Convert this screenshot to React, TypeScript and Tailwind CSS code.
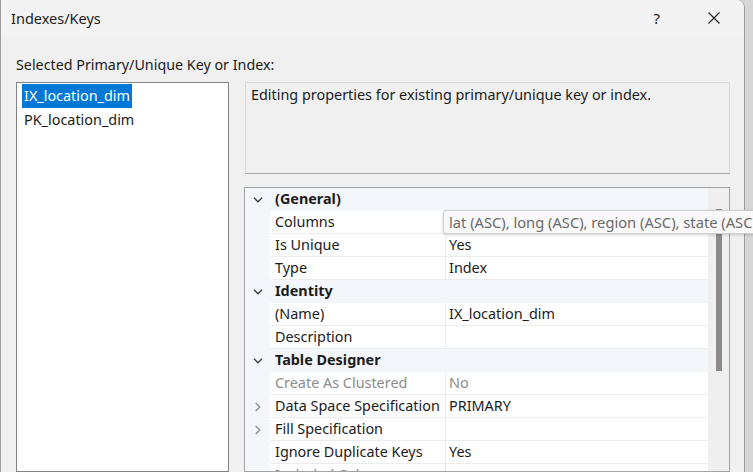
import React from "react";

type Row =
  | { kind: "cat"; label: string }
  | { kind: "prop"; label: string; value?: string; muted?: boolean; expand?: boolean };

const rows: Row[] = [
  { kind: "cat", label: "(General)" },
  { kind: "prop", label: "Columns", value: "" },
  { kind: "prop", label: "Is Unique", value: "Yes" },
  { kind: "prop", label: "Type", value: "Index" },
  { kind: "cat", label: "Identity" },
  { kind: "prop", label: "(Name)", value: "IX_location_dim" },
  { kind: "prop", label: "Description", value: "" },
  { kind: "cat", label: "Table Designer" },
  { kind: "prop", label: "Create As Clustered", value: "No", muted: true },
  { kind: "prop", label: "Data Space Specification", value: "PRIMARY", expand: true },
  { kind: "prop", label: "Fill Specification", value: "", expand: true },
  { kind: "prop", label: "Ignore Duplicate Keys", value: "Yes" },
  { kind: "prop", label: "Included Columns", value: "", muted: true },
];

function ChevronDown() {
  return (
    <svg width="10" height="6" viewBox="0 0 10 6" className="block">
      <path d="M1 0.8 L5 4.8 L9 0.8" fill="none" stroke="#3a3a3a" strokeWidth="1.3" />
    </svg>
  );
}

function ChevronRight() {
  return (
    <svg width="6" height="10" viewBox="0 0 6 10" className="block">
      <path d="M0.8 1 L4.8 5 L0.8 9" fill="none" stroke="#8a8a8a" strokeWidth="1.3" />
    </svg>
  );
}

export default function App() {
  return (
    <div className="w-[753px] h-[472px] overflow-hidden bg-[#d6d6d6] font-['Noto_Sans',sans-serif] text-[#1b1b1b] relative">
      <div className="w-[745px] h-full bg-[#f0f0f0] border-l border-r border-[#9c9c9c] rounded-tr-[8px] flex flex-col">
        {/* Title bar */}
        <div className="h-[36px] shrink-0 bg-[#f3f3f3] rounded-tr-[8px] flex items-center pl-[10px]">
          <span className="text-[14.5px] leading-none">Indexes/Keys</span>
          <span className="ml-auto text-[15px] leading-none mr-[48px]">?</span>
          <svg width="12" height="12" viewBox="0 0 12 12" className="mr-[24px]">
            <path d="M0.5 0.5 L11.5 11.5 M11.5 0.5 L0.5 11.5" stroke="#1b1b1b" strokeWidth="1.1" />
          </svg>
        </div>

        {/* Body */}
        <div className="flex-1 flex flex-col pt-[20px] min-h-0">
          <div className="pl-[15px] h-[18px] flex items-center text-[14.3px] leading-none">
            Selected Primary/Unique Key or Index:
          </div>
          <div className="flex mt-[8px] flex-1 min-h-0">
            {/* List box */}
            <div className="ml-[15px] w-[213px] border border-[#828282] bg-white pt-[1px] pl-[5px] text-[14.4px] leading-none">
              <div className="inline-flex items-center h-[24px] px-[2px] bg-[#0078d7] text-white">IX_location_dim</div>
              <div className="flex items-center h-[24px] px-[2px]">PK_location_dim</div>
            </div>

            {/* Right column */}
            <div className="ml-[15px] w-[486px] flex flex-col">
              <div className="ml-[1px] w-[485px] h-[92px] bg-[#f0f0f0] border border-[#dadada] border-b-[#a8a8a8] pl-[5px] pt-[2px] text-[14.4px] leading-[20px]">
                Editing properties for existing primary/unique key or index.
              </div>
              <div className="mt-[13px] flex-1 border border-[#a3a3a3] flex min-h-0 overflow-hidden">
                <div className="w-[463px] flex flex-col text-[14.4px] leading-none">
                  {rows.map((r, i) =>
                    r.kind === "cat" ? (
                      <div key={i} className="h-[23px] shrink-0 flex items-center bg-[#f3f6fa]">
                        <div className="w-[25px] flex justify-center pl-[1px]">
                          <ChevronDown />
                        </div>
                        <span className="pl-[5px] font-bold">{r.label}</span>
                      </div>
                    ) : (
                      <div key={i} className="h-[23px] shrink-0 flex bg-[#f3f6fa]">
                        <div className="w-[25px] flex items-center justify-center pl-[1px]">
                          {r.expand ? <ChevronRight /> : null}
                        </div>
                        <div
                          className={`w-[175px] bg-white border-b border-[#ececec] flex items-center pl-[5px] whitespace-nowrap ${
                            r.muted ? "text-[#8c8c8c]" : ""
                          }`}
                        >
                          {r.label}
                        </div>
                        <div className="w-[1px] bg-[#ececec]" />
                        <div
                          className={`w-[262px] bg-white border-b border-[#ececec] flex items-center pl-[3px] ${
                            r.muted ? "text-[#8c8c8c]" : ""
                          }`}
                        >
                          {r.value}
                        </div>
                      </div>
                    )
                  )}
                </div>
                {/* Scrollbar */}
                <div className="w-[21px] bg-[#efefef] flex justify-center pt-[21px]">
                  <div className="w-[6px] h-[162px] bg-[#8a8a8a] ml-[1px]" />
                </div>
              </div>
            </div>
          </div>
        </div>
      </div>

      {/* Tooltip over the Columns value */}
      <div className="absolute left-[443px] top-[210px] h-[24px] w-[340px] bg-[#f9f9f9] border border-[#cfcfcf] rounded-[3px] shadow-[0_1px_3px_rgba(0,0,0,0.18)] flex items-center pl-[5px] text-[14.7px] leading-none text-[#6a6a6a] whitespace-nowrap">
        lat (ASC), long (ASC), region (ASC), state (ASC)
      </div>
    </div>
  );
}
